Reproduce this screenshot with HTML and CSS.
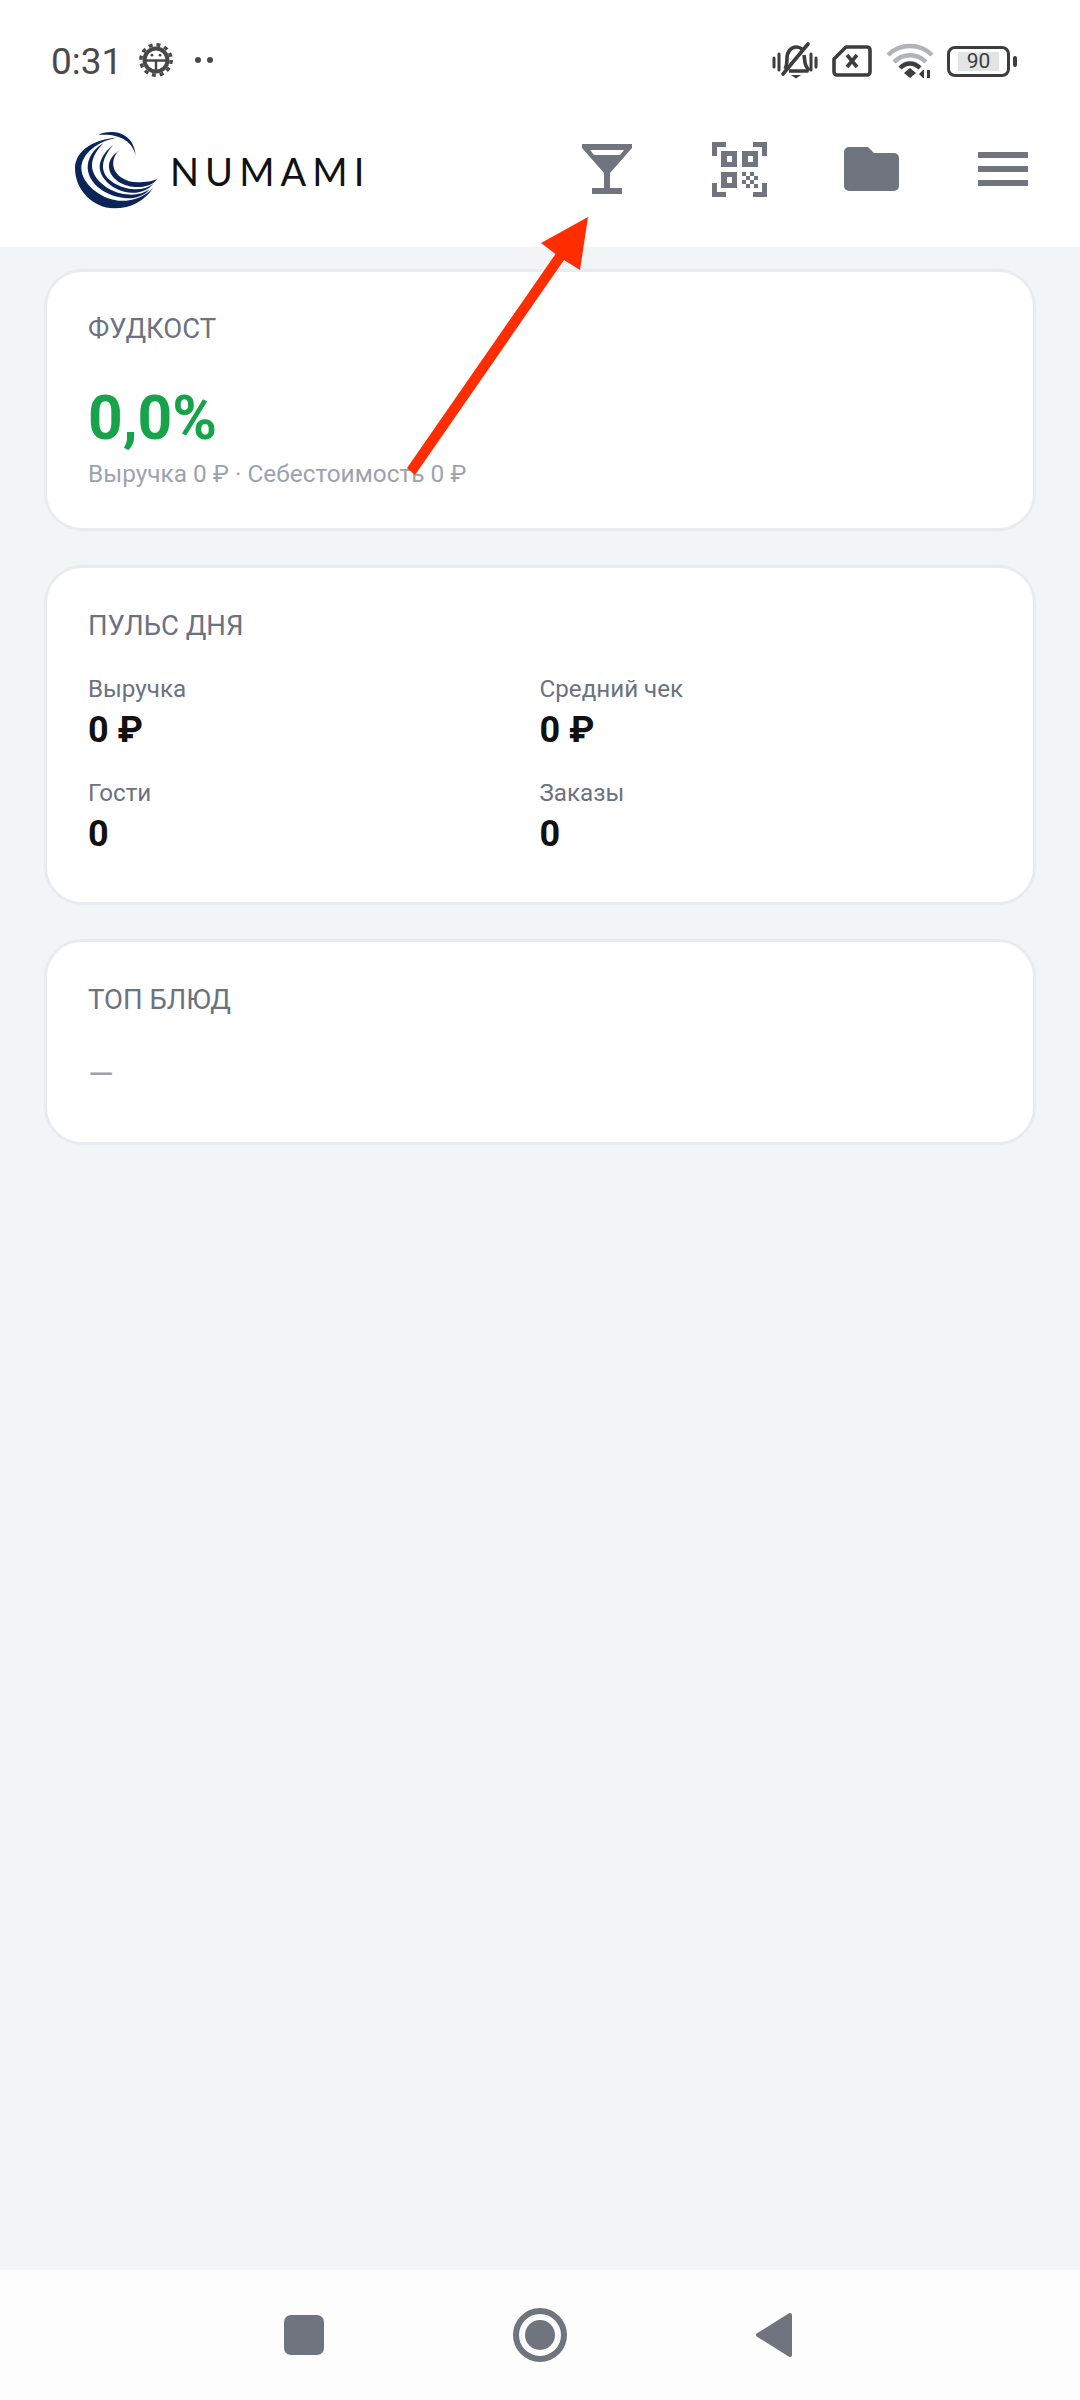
FILE: index.html
```html
<!DOCTYPE html>
<html lang="ru">
<head>
<meta charset="utf-8">
<title>Numami</title>
<link rel="stylesheet" href="styles.css">
</head>
<body>
<div class="app">
  <div class="status">
    <div class="status-left">
      <span class="time">0:31</span>
      <svg class="gear" viewBox="0 0 36 36" width="36" height="36">
        <circle cx="18" cy="18" r="15.200" fill="none" stroke="#484848" stroke-width="3.400" stroke-dasharray="4 3.960"/>
        <circle cx="18" cy="18" r="11.500" fill="none" stroke="#484848" stroke-width="4"/>
        <path d="M7 18.500H29M18 18.500V29" stroke="#484848" stroke-width="2.400" fill="none"/>
        <circle cx="14" cy="13.200" r="1.400" fill="#484848"/>
        <circle cx="22" cy="13.200" r="1.400" fill="#484848"/>
      </svg>
      <span class="dots"><i></i><i></i></span>
    </div>
    <div class="status-right">
      <svg viewBox="0 0 46 42" width="46" height="42">
        <path d="M2 18v9M7 14v16M39 14v16M44 18v9" stroke="#3d3d3d" stroke-width="3" fill="none" stroke-linecap="round"/>
        <path d="M13 29c2-3 2-6 2-11 0-6 4-11 9-11 3 0 5 1 7 3M32 15c1 5 0 10 4 14l-1 2H17" fill="none" stroke="#3d3d3d" stroke-width="3.6"/>
        <path d="M11 34L36 4" stroke="#3d3d3d" stroke-width="3.6" stroke-linecap="round"/>
        <path d="M19 35h10l-5 3.500z" fill="#3d3d3d"/>
      </svg>
      <svg viewBox="0 0 40 32" width="40" height="32">
        <path d="M14 2H35a3 3 0 0 1 3 3V27a3 3 0 0 1-3 3H5a3 3 0 0 1-3-3V14z" fill="none" stroke="#3d3d3d" stroke-width="3.600" stroke-linejoin="round"/>
        <path d="M15 10L25 22M25 10L15 22" stroke="#3d3d3d" stroke-width="3.600"/>
      </svg>
      <svg viewBox="0 0 48 36" width="48" height="36">
        <path d="M2 12C14 0 34 0 46 12" fill="none" stroke="#b1b3b6" stroke-width="4.500"/>
        <path d="M8 19C17 10 31 10 40 19" fill="none" stroke="#b1b3b6" stroke-width="4.500"/>
        <path d="M14 25C20 19 28 19 34 25" fill="none" stroke="#3d3d3d" stroke-width="4.500"/>
        <path d="M24 25l6 5-6 5-6-5z" fill="#3d3d3d"/>
        <path d="M38 27h-1l-4 4 4 4h1zM41 27h3v8h-3z" fill="#3d3d3d"/>
      </svg>
      <div class="battery"><span class="battery-body"><span class="battery-level">90</span></span><i class="battery-nub"></i></div>
    </div>
  </div>

  <header class="topbar">
    <div class="brand">
      <svg class="wave" viewBox="0 0 270 255" width="90" height="85">
        <path fill="#0b2559" d="M140 38C75 42 15 75 15 130C15 195 70 250 132 250C185 250 225 225 250 188C225 215 185 230 145 227C90 222 35 175 34 130C34 85 85 48 140 38Z"/>
        <path fill="#0b2559" d="M85 30C110 15 190 10 197 92C188 50 150 25 85 30Z"/>
        <path fill="#0b2559" d="M100 55C70 72 52 100 53 130C56 175 105 215 170 220C200 221 225 210 240 192C222 205 195 212 170 208C120 203 67 165 66 122C66 98 80 75 100 55Z"/>
        <path fill="#0b2559" d="M130 60C105 78 88 105 89 128C92 165 135 200 185 203C210 204 235 195 250 176C232 190 210 195 185 192C140 186 99 160 99 125C99 102 112 80 130 60Z"/>
        <path fill="#0b2559" d="M150 75C135 85 128 105 130 122C134 150 165 172 205 172C225 172 250 170 263 160C250 180 225 188 195 186C150 182 116 155 117 122C117 105 130 88 150 75Z"/>
      </svg>
      <span class="brand-name">NUMAMI</span>
    </div>
    <nav class="top-icons">
      <span class="top-icon">
        <svg viewBox="0 0 50 50" width="50" height="50">
          <path fill="#6f747e" fill-rule="evenodd" d="M0 0H50V4L28 29V44H40V50H10V44H22V29L0 4ZM8 6L12 11H38L42 6Z"/>
        </svg>
      </span>
      <span class="top-icon">
        <svg viewBox="0 0 55 55" width="55" height="55">
          <path fill="#6f747e" d="M0 0H14V5H5V14H0ZM41 0H55V14H50V5H41ZM0 41H5V50H14V55H0ZM50 41H55V55H41V50H50Z"/>
          <path fill="#6f747e" fill-rule="evenodd" d="M9 9H25V25H9ZM15 14V20H20V14ZM30 9H46V25H30ZM36 14V20H41V14ZM9 30H25V46H9ZM15 35V41H20V35Z"/>
          <path fill="#6f747e" d="M30 30H34V34H30ZM38 30H42V34H38ZM34 34H38V38H34ZM42 34H46V38H42ZM30 38H34V42H30ZM38 38H42V42H38ZM42 42H46V46H42ZM34 42H38V46H34Z"/>
        </svg>
      </span>
      <span class="top-icon">
        <svg viewBox="0 0 55 44" width="55" height="44">
          <path fill="#6f747e" d="M5 0H24L30 6H50A5 5 0 0 1 55 11V39A5 5 0 0 1 50 44H5A5 5 0 0 1 0 39V5A5 5 0 0 1 5 0Z"/>
        </svg>
      </span>
      <span class="top-icon">
        <svg viewBox="0 0 50 34" width="50" height="34">
          <path fill="#6f747e" d="M0 0H50V6H0ZM0 14H50V20H0ZM0 28H50V34H0Z"/>
        </svg>
      </span>
    </nav>
  </header>

  <main class="content">
    <section class="card card-food">
      <h2 class="card-title">ФУДКОСТ</h2>
      <div class="food-value">0,0%</div>
      <div class="food-sub">Выручка 0 ₽ · Себестоимость 0 ₽</div>
    </section>
    <section class="card card-pulse">
      <h2 class="card-title">ПУЛЬС ДНЯ</h2>
      <div class="stats">
        <div class="stat"><div class="stat-label">Выручка</div><div class="stat-value">0 ₽</div></div>
        <div class="stat"><div class="stat-label">Средний чек</div><div class="stat-value">0 ₽</div></div>
        <div class="stat"><div class="stat-label">Гости</div><div class="stat-value">0</div></div>
        <div class="stat"><div class="stat-label">Заказы</div><div class="stat-value">0</div></div>
      </div>
    </section>
    <section class="card card-top">
      <h2 class="card-title">ТОП БЛЮД</h2>
      <div class="top-empty">—</div>
    </section>
  </main>

  <footer class="navbar">
    <svg viewBox="0 0 40 40" width="40" height="40"><rect width="40" height="40" rx="7" fill="#6f747e"/></svg>
    <svg viewBox="0 0 54 54" width="54" height="54"><circle cx="27" cy="27" r="24" fill="none" stroke="#6f747e" stroke-width="6"/><circle cx="27" cy="27" r="15" fill="#6f747e"/></svg>
    <svg viewBox="0 0 38 46" width="38" height="46"><path d="M35 3L3 23L35 43Z" fill="#6f747e" stroke="#6f747e" stroke-width="4" stroke-linejoin="round"/></svg>
  </footer>

  <svg class="annotation" viewBox="0 0 1080 2400" width="1080" height="2400">
    <path fill="#ff2d00" d="M588 217L541 243L555.500 254L407 468L415 475L564 260L580 270Z"/>
  </svg>
</div>
</body>
</html>
```
FILE: styles.css
```css
* { box-sizing: border-box; }
html, body { margin: 0; padding: 0; }
body { font-family: Roboto, "Noto Sans", sans-serif; background: #f3f4f6; }
.app { position: relative; width: 1080px; height: 2400px; display: flex; flex-direction: column; overflow: hidden; }

.status { height: 91px; padding: 29px 63px 0 51px; background: #fff; display: flex; justify-content: space-between; align-items: flex-start; }
.status-left { height: 62px; display: flex; align-items: center; }
.time { font-size: 37px; color: #4a4a4a; line-height: 1; padding-top: 3px; }
.gear { margin-left: 16px; }
.dots { margin-left: 21px; display: flex; gap: 6px; }
.dots i { width: 6px; height: 6px; border-radius: 50%; background: #484848; display: block; }
.status-right { height: 62px; padding-top: 2px; display: flex; align-items: center; gap: 14px; }
.status-right svg:nth-child(3) { margin-right: -3px; }
.battery { display: flex; align-items: center; gap: 3px; margin-left: 2px; }
.battery-body { width: 63px; height: 31px; border: 3.500px solid #3d3d3d; border-radius: 8px; padding: 3px 8px; display: block; }
.battery-level { display: block; height: 100%; background: #e3e4e6; color: #3d3d3d; font-size: 21px; line-height: 18px; text-align: center; }
.battery-nub { width: 4px; height: 11px; background: #3d3d3d; border-radius: 2px; display: block; }

.topbar { height: 156px; background: #fff; display: flex; align-items: center; justify-content: space-between; padding: 0 11px 0 70px; }
.brand { display: flex; align-items: center; gap: 10px; }
.wave { display: block; margin-bottom: 3px; }
.brand-name { font-family: Lato, sans-serif; font-weight: 400; font-size: 38px; letter-spacing: 6.100px; color: #111; line-height: 1; margin-top: 4px; }
.top-icons { display: flex; }
.top-icon { width: 132px; display: flex; justify-content: center; align-items: center; }

.content { flex: 1; padding: 22px 44px 0; display: flex; flex-direction: column; gap: 34px; }
.card { background: #fff; border: 3px solid #e9ebef; border-radius: 38px; padding: 43px 42px 0 41px; }
.card-food { height: 262px; padding-top: 42px; }
.card-pulse { height: 340px; }
.card-top { height: 206px; }
.card-title { margin: 0; font-size: 27.500px; line-height: 30px; font-weight: 400; color: #6b7280; }
.food-value { margin-top: 39px; font-size: 60.500px; line-height: 72px; font-weight: 700; color: #16a34a; }
.food-sub { font-size: 24.400px; line-height: 30px; color: #9ca3af; margin-top: 4px; }
.stats { display: grid; grid-template-columns: 1fr 1fr; row-gap: 26px; margin-top: 33px; }
.stat-label { font-size: 24.200px; line-height: 30px; color: #6b7280; }
.stat-value { font-size: 36px; line-height: 43px; padding-top: 5px; font-weight: 700; color: #111; }
.top-empty { margin-top: 40px; font-size: 33px; line-height: 40px; color: #9ca3af; }

.navbar { height: 130px; background: #fdfdfd; display: flex; align-items: center; padding: 0 287px 0 284px; justify-content: space-between; }

.annotation { position: absolute; left: 0; top: 0; pointer-events: none; }
```
